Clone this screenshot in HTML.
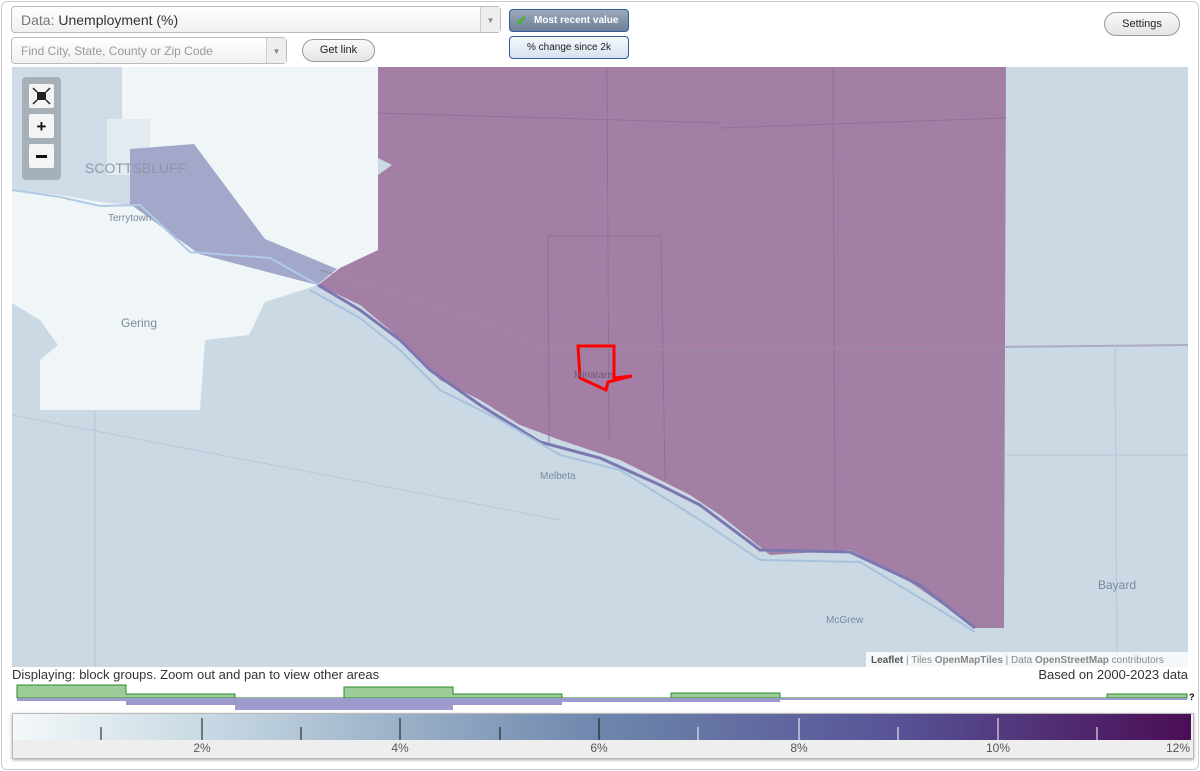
<!DOCTYPE html>
<html><head><meta charset="utf-8"><style>
body{margin:0;width:1200px;height:771px;background:#fff;font-family:"Liberation Sans",sans-serif;position:relative;overflow:hidden}
.frame{position:absolute;left:1px;top:1px;width:1196px;height:767px;border:1px solid #ccc;border-radius:6px}
.abs{position:absolute}
.sel{background:linear-gradient(#fff,#f0f0f0);border:1px solid #bbb;border-radius:4px;box-sizing:border-box}
.btn{background:linear-gradient(#fafafa,#e4e4e4);border:1px solid #999;border-radius:12px;box-sizing:border-box;font-size:11px;text-align:center}
.dd{position:absolute;right:0;top:0;bottom:0;width:19px;border-left:1px solid #ccc;background:#eee;color:#888;font-size:8px;text-align:center}
</style></head><body>
<div class="frame"></div>
<div class="abs sel" style="left:11px;top:6px;width:490px;height:27px;font-size:14px;line-height:26px;padding-left:9px;color:#333"><span style="color:#777">Data:</span> Unemployment (%)<div class="dd" style="line-height:27px">▼</div></div>
<div class="abs sel" style="left:11px;top:37px;width:276px;height:27px;font-size:12px;line-height:26px;padding-left:9px;color:#999">Find City, State, County or Zip Code<div class="dd" style="line-height:27px">▼</div></div>
<div class="abs btn" style="left:302px;top:39px;width:73px;height:23px;line-height:21px;color:#222">Get link</div>
<div class="abs" style="left:509px;top:9px;width:120px;height:23px;box-sizing:border-box;border:1px solid #2f5f9a;border-radius:4px;background:linear-gradient(#9aa8bb,#6f8099);color:#fff;font-size:10px;font-weight:bold;line-height:21px;padding-left:24px">Most recent value<span style="position:absolute;left:6px;top:0;color:#4caf2f;font-size:13px">✔</span></div>
<div class="abs" style="left:509px;top:36px;width:120px;height:23px;box-sizing:border-box;border:1px solid #2f5f9a;border-radius:4px;background:linear-gradient(#f4f8fc,#d6e2ee);color:#222;font-size:10px;line-height:21px;text-align:center">% change since 2k</div>
<div class="abs btn" style="left:1104px;top:12px;width:76px;height:24px;line-height:22px;color:#222">Settings</div>

<svg class="abs" style="left:12px;top:67px" width="1176" height="600" viewBox="12 67 1176 600">
<rect x="12" y="67" width="1176" height="600" fill="#cbd9e5"/>
<polygon points="12,67 378,67 378,250 318,285 265,302 249,335 205,340 200,410 40,410 40,360 58,345 40,320 12,303" fill="#f0f5f8"/>
<polygon points="12,67 122,67 122,119 107,119 107,150 130,150 130,205 100,202 60,195 12,190" fill="#cfdce8"/>
<rect x="107" y="119" width="43" height="56" fill="#e3ebf1"/>
<polygon points="130,149 194,144 265,239 337,269 317,285 199,254 130,204" fill="#a3a7ca"/>
<polygon points="378,67 1006,67 1004,628 975,628 965,620 900,575 850,550 770,555 720,515 690,495 660,480 620,460 560,440 520,425 480,400 440,380 420,360 390,330 360,305 318,285 340,268 378,250 378,175 392,165 378,158" fill="#a47fa5"/>
<g fill="none" stroke="#8b6a92" stroke-width="1" opacity=".7">
<polyline points="548,236 661,236 665,480"/><line x1="548" y1="236" x2="549" y2="445"/>
<line x1="378" y1="113" x2="720" y2="123"/><line x1="720" y1="128" x2="1006" y2="118"/>
<line x1="833" y1="67" x2="835" y2="548"/><line x1="607" y1="67" x2="609" y2="440"/>
</g>
<polyline points="320,270 480,320 540,347 700,350 1188,345" fill="none" stroke="#9a8aa6" stroke-width="2" opacity=".6"/>
<polyline points="12,190 60,197 100,206 140,205 190,252 270,258 318,285" fill="none" stroke="#b0cbe4" stroke-width="2"/>
<polyline points="318,285 360,310 400,340 430,370 480,405 540,442 600,458 660,485 700,505 760,550 850,552 920,585 975,628" fill="none" stroke="#7b77b0" stroke-width="3"/>
<polyline points="310,290 360,318 400,350 440,390 500,420 560,455 620,470 700,520 760,560 860,562 940,610 975,632" fill="none" stroke="#a7c2dd" stroke-width="2"/>
<g fill="none" stroke="#b9c8d6" stroke-width="1">
<line x1="1115" y1="345" x2="1117" y2="667"/><line x1="1006" y1="455" x2="1188" y2="455"/>
<line x1="12" y1="415" x2="560" y2="520"/><line x1="95" y1="410" x2="95" y2="667"/>
</g>
<polygon points="578,346 614,346 614,378 632,376 608,382 606,390 580,378" fill="none" stroke="#f00" stroke-width="3"/>
<g font-size="10" fill="#7a8a9a"><text x="108" y="221">Terrytown</text><text x="540" y="479">Melbeta</text><text x="826" y="623">McGrew</text><text x="1098" y="589" font-size="12">Bayard</text><text x="574" y="378" fill="#6d5a78">Minatare</text><text x="121" y="327" font-size="12">Gering</text></g>
<text x="85" y="173" font-size="14" fill="#8a9aaa">SCOTTSBLUFF</text>
<rect x="22" y="77" width="39" height="103" rx="4" fill="#8a9399" opacity=".6"/>
<rect x="29" y="84" width="25" height="24" rx="2" fill="#f4f4f4"/><rect x="37" y="92" width="9" height="8" fill="#222"/>
<g stroke="#222" stroke-width="1.5"><line x1="33" y1="88" x2="37" y2="92"/><line x1="50" y1="88" x2="46" y2="92"/><line x1="33" y1="104" x2="37" y2="100"/><line x1="50" y1="104" x2="46" y2="100"/></g>
<rect x="29" y="114" width="25" height="24" rx="2" fill="#f4f4f4"/><text x="41.5" y="132" font-size="17" font-weight="bold" text-anchor="middle" fill="#111">+</text>
<rect x="29" y="144" width="25" height="24" rx="2" fill="#f4f4f4"/><rect x="36" y="155" width="11" height="3" fill="#111"/>
<rect x="866" y="652" width="322" height="15" fill="#fff" opacity=".8"/>
<text x="871" y="663" font-size="10" fill="#888"><tspan fill="#555" font-weight="bold">Leaflet</tspan> | Tiles <tspan font-weight="bold">OpenMapTiles</tspan> | Data <tspan font-weight="bold">OpenStreetMap</tspan> contributors</text>
</svg>
<div class="abs" style="left:12px;top:667px;font-size:13px;color:#333">Displaying: block groups. Zoom out and pan to view other areas</div>
<div class="abs" style="right:12px;top:667px;font-size:13px;color:#333">Based on 2000-2023 data</div>
<svg class="abs" style="left:0;top:680px" width="1200" height="35" viewBox="0 680 1200 35">
<path d="M17,698 V685 H126 V694 H235 V698 H344 V687 H453 V694 H562 V698 H671 V693 H780 V698 H1107 V694 H1187 V698 Z" fill="#9ccc98" stroke="#2d8a2d" stroke-width="1"/>
<path d="M17,698 V701 H126 V705 H235 V710 H453 V705 H562 V702 H780 V700 H1187 V698 Z" fill="#9d9ace"/>
<text x="1189" y="700" font-size="9" font-weight="bold">?</text>
</svg>
<div class="abs" style="left:12px;top:713px;width:1180px;height:44px;border:1px solid #bbb;box-shadow:0 1px 3px #aaa;background:#eee"></div>
<svg class="abs" style="left:13px;top:714px" width="1178" height="42">
<defs><linearGradient id="g"><stop offset="0" stop-color="#f4f8fa"/><stop offset=".17" stop-color="#c6d8e2"/><stop offset=".5" stop-color="#6d86ac"/><stop offset=".75" stop-color="#575396"/><stop offset="1" stop-color="#4b0d55"/></linearGradient></defs>
<rect width="1178" height="26" fill="url(#g)"/>
<g stroke="#111"><line x1="88" y1="13" x2="88" y2="26"/><line x1="189" y1="4" x2="189" y2="26"/><line x1="288" y1="13" x2="288" y2="26"/><line x1="387" y1="4" x2="387" y2="26"/><line x1="487" y1="13" x2="487" y2="26"/><line x1="586" y1="4" x2="586" y2="26"/></g>
<g stroke="#fff"><line x1="685" y1="13" x2="685" y2="26"/><line x1="786" y1="4" x2="786" y2="26"/><line x1="885" y1="13" x2="885" y2="26"/><line x1="985" y1="4" x2="985" y2="26"/><line x1="1084" y1="13" x2="1084" y2="26"/></g>
<g font-size="12" fill="#555" text-anchor="middle"><text x="189" y="38">2%</text><text x="387" y="38">4%</text><text x="586" y="38">6%</text><text x="786" y="38">8%</text><text x="985" y="38">10%</text><text x="1165" y="38">12%</text></g>
</svg>
</body></html>
